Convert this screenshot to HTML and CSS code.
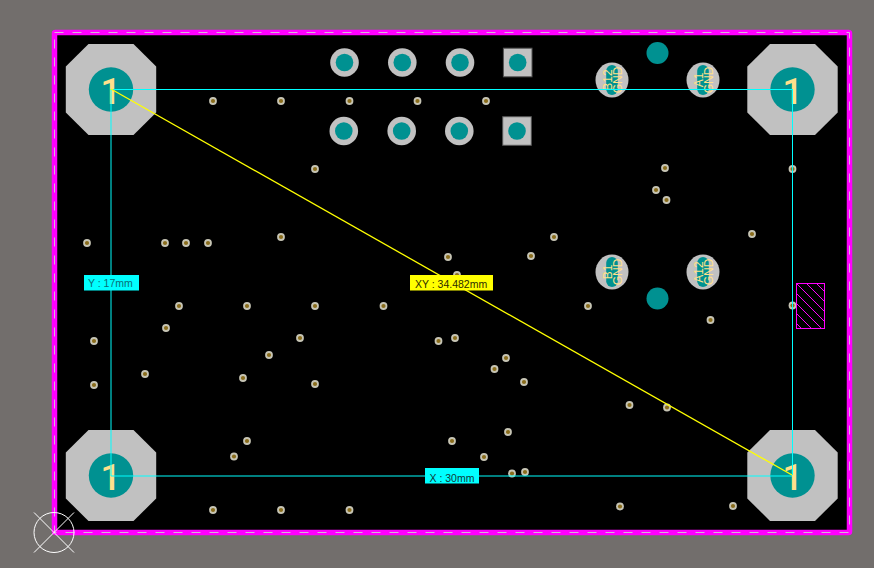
FILE: index.html
```html
<!DOCTYPE html>
<html lang="en">
<head>
<meta charset="utf-8">
<title>PCB layout</title>
<link rel="stylesheet" href="styles.css">
</head>
<body>
<svg class="board" width="874" height="568" viewBox="0 0 874 568" xmlns="http://www.w3.org/2000/svg">
  <defs>
    <pattern id="hatch" width="10" height="10" patternUnits="userSpaceOnUse" patternTransform="translate(797 284)">
      <path class="hatch-line" d="M-1 -1L11 11"/>
    </pattern>
    <g id="corner-pad">
      <polygon class="pad" points="-22.5,-45.5 22.5,-45.5 45.2,-23 45.2,23 22.5,45.5 -22.5,45.5 -45.2,23 -45.2,-23"/>
      <circle class="hole" r="22.2"/>
    </g>
    <g id="round-pad"><circle class="pad" r="14.3"/><circle class="hole" r="8.8"/></g>
    <g id="square-pad"><rect class="pad pad-edge" x="-14.3" y="-14.3" width="28.6" height="28.6"/><circle class="hole" r="8.8"/></g>
    <g id="slot-pad"><ellipse class="pad" rx="16.5" ry="17.5"/><rect class="hole" x="-5.8" y="-15" width="11.6" height="30" rx="5.8"/></g>
    <g id="via"><circle class="via-ring" r="3.9"/><circle class="via-core" r="2.1"/></g>
  </defs>

  <rect class="outline" x="54.5" y="32.5" width="795" height="500" rx="1"/>
  <rect class="outline-dash" x="54.5" y="32.5" width="795" height="500"/>

  <use href="#corner-pad" x="111" y="89.5"/>
  <use href="#corner-pad" x="792.5" y="89.5"/>
  <use href="#corner-pad" x="111" y="475.5"/>
  <use href="#corner-pad" x="792.5" y="475.5"/>

  <use href="#round-pad" x="344.5" y="62.5"/>
  <use href="#round-pad" x="402.3" y="62.5"/>
  <use href="#round-pad" x="460" y="62.5"/>
  <use href="#square-pad" x="517.7" y="62.5"/>
  <use href="#round-pad" x="343.8" y="131"/>
  <use href="#round-pad" x="401.7" y="131"/>
  <use href="#round-pad" x="459.3" y="131"/>
  <use href="#square-pad" x="517" y="131"/>

  <use href="#slot-pad" x="612" y="80"/>
  <use href="#slot-pad" x="703" y="80"/>
  <use href="#slot-pad" x="612" y="272"/>
  <use href="#slot-pad" x="703" y="272"/>
  <circle class="hole" cx="657.5" cy="53" r="11"/>
  <circle class="hole" cx="657.5" cy="298.5" r="11"/>

  <g class="pad-label">
    <text transform="translate(612 80) rotate(-90)">B12</text>
    <text transform="translate(622 80) rotate(-90)">GND</text>
    <text transform="translate(703 80) rotate(-90)">A1</text>
    <text transform="translate(713 80) rotate(-90)">GND</text>
    <text transform="translate(612 272) rotate(-90)">B1</text>
    <text transform="translate(622 272) rotate(-90)">GND</text>
    <text transform="translate(703 272) rotate(-90)">A12</text>
    <text transform="translate(713 272) rotate(-90)">GND</text>
  </g>

  <g class="pin-number">
    <text x="100.5" y="104">1</text>
    <text x="782.5" y="104">1</text>
    <text x="100.5" y="490">1</text>
    <text x="782.5" y="490">1</text>
  </g>

  <use href="#via" x="213" y="101"/><use href="#via" x="281" y="101"/><use href="#via" x="349.5" y="101"/><use href="#via" x="417.5" y="101"/><use href="#via" x="486" y="101"/>
  <use href="#via" x="315" y="169"/><use href="#via" x="665" y="168"/><use href="#via" x="656" y="190"/><use href="#via" x="666.5" y="200"/>
  <use href="#via" x="752" y="234"/><use href="#via" x="554" y="237"/><use href="#via" x="531" y="256"/><use href="#via" x="448" y="257"/><use href="#via" x="457" y="275"/>
  <use href="#via" x="281" y="237"/><use href="#via" x="87" y="243"/><use href="#via" x="165" y="243"/><use href="#via" x="186" y="243"/><use href="#via" x="208" y="243"/>
  <use href="#via" x="588" y="306"/><use href="#via" x="179" y="306"/><use href="#via" x="247" y="306"/><use href="#via" x="315" y="306"/><use href="#via" x="383.5" y="306"/>
  <use href="#via" x="710.5" y="320"/><use href="#via" x="166" y="328"/><use href="#via" x="94" y="341"/><use href="#via" x="300" y="338"/><use href="#via" x="438.5" y="341"/><use href="#via" x="455" y="338"/>
  <use href="#via" x="269" y="355"/><use href="#via" x="506" y="358"/><use href="#via" x="494.5" y="369"/><use href="#via" x="145" y="374"/><use href="#via" x="243" y="378"/>
  <use href="#via" x="94" y="385"/><use href="#via" x="315" y="384"/><use href="#via" x="524" y="382"/><use href="#via" x="629.5" y="405"/><use href="#via" x="667" y="407.5"/>
  <use href="#via" x="508" y="432"/><use href="#via" x="452" y="441"/><use href="#via" x="247" y="441"/><use href="#via" x="234" y="456.5"/><use href="#via" x="484" y="457"/>
  <use href="#via" x="512" y="473.5"/><use href="#via" x="525" y="472"/><use href="#via" x="620" y="506.5"/><use href="#via" x="733" y="506"/>
  <use href="#via" x="213" y="510"/><use href="#via" x="281" y="510"/><use href="#via" x="349.5" y="510"/>
  <use href="#via" x="792.5" y="169"/><use href="#via" x="792.5" y="305.5"/>

  <rect class="keepout" x="796.5" y="283.5" width="28" height="45"/>

  <path class="dim" d="M111 89.5H792M792.5 89V475"/>
  <path class="dim" d="M111 89V476H792"/>
  <path class="dim-diag" d="M111 89L792 475"/>

  <rect class="tag-cyan" x="84" y="275" width="55" height="15.5"/>
  <text class="tag-text tag-text-y" x="88" y="287">Y : 17mm</text>
  <rect class="tag-yellow" x="410" y="275" width="83" height="15.5"/>
  <text class="tag-text tag-text-xy" x="415" y="287.5">XY : 34.482mm</text>
  <rect class="tag-cyan" x="425" y="468" width="54" height="15.5"/>
  <text class="tag-text tag-text-x" x="429.5" y="481.5">X : 30mm</text>

  <g class="origin">
    <circle cx="54" cy="532.5" r="20"/>
    <path d="M34 512.5L74 552.5M74 512.5L34 552.5"/>
  </g>
</svg>
</body>
</html>
```

FILE: styles.css
```css
html, body {
  margin: 0;
  padding: 0;
  background: #726e6c;
}

.board {
  display: block;
}

.outline {
  fill: #000;
  stroke: #ff00ff;
  stroke-width: 5.5;
}

.outline-dash {
  fill: none;
  stroke: #d8b4d8;
  stroke-width: 1;
  stroke-dasharray: 9 9;
}

.pad {
  fill: #c1c1c1;
}

.pad-edge {
  stroke: #555;
  stroke-width: 1;
}

.hole {
  fill: #009191;
}

.via-ring {
  fill: #c6c4b4;
}

.via-core {
  fill: #8a6d1c;
}

.pad-label {
  font-family: "Liberation Sans", sans-serif;
  font-size: 12px;
  fill: #ffe08c;
  text-anchor: middle;
}

.pin-number {
  font-family: Roboto, sans-serif;
  font-size: 36px;
  font-weight: 500;
  fill: #ffe08c;
}

.hatch-line {
  stroke: #ff00ff;
  stroke-width: 1;
  fill: none;
  shape-rendering: crispEdges;
}

.keepout {
  fill: url(#hatch);
  stroke: #ff00ff;
  stroke-width: 1;
}

.dim {
  fill: none;
  stroke: #00ffff;
  stroke-width: 1;
}

.dim-diag {
  fill: none;
  stroke: #ffff00;
  stroke-width: 1.3;
}

.tag-cyan {
  fill: #00ffff;
}

.tag-yellow {
  fill: #ffff00;
}

.tag-text {
  font-family: "Liberation Sans", sans-serif;
  font-size: 10.5px;
}

.tag-text-y {
  fill: #0a6e74;
}

.tag-text-xy {
  fill: #2b2b00;
}

.tag-text-x {
  fill: #103838;
}

.origin {
  fill: none;
  stroke: #fff;
  stroke-width: 1;
}
```
